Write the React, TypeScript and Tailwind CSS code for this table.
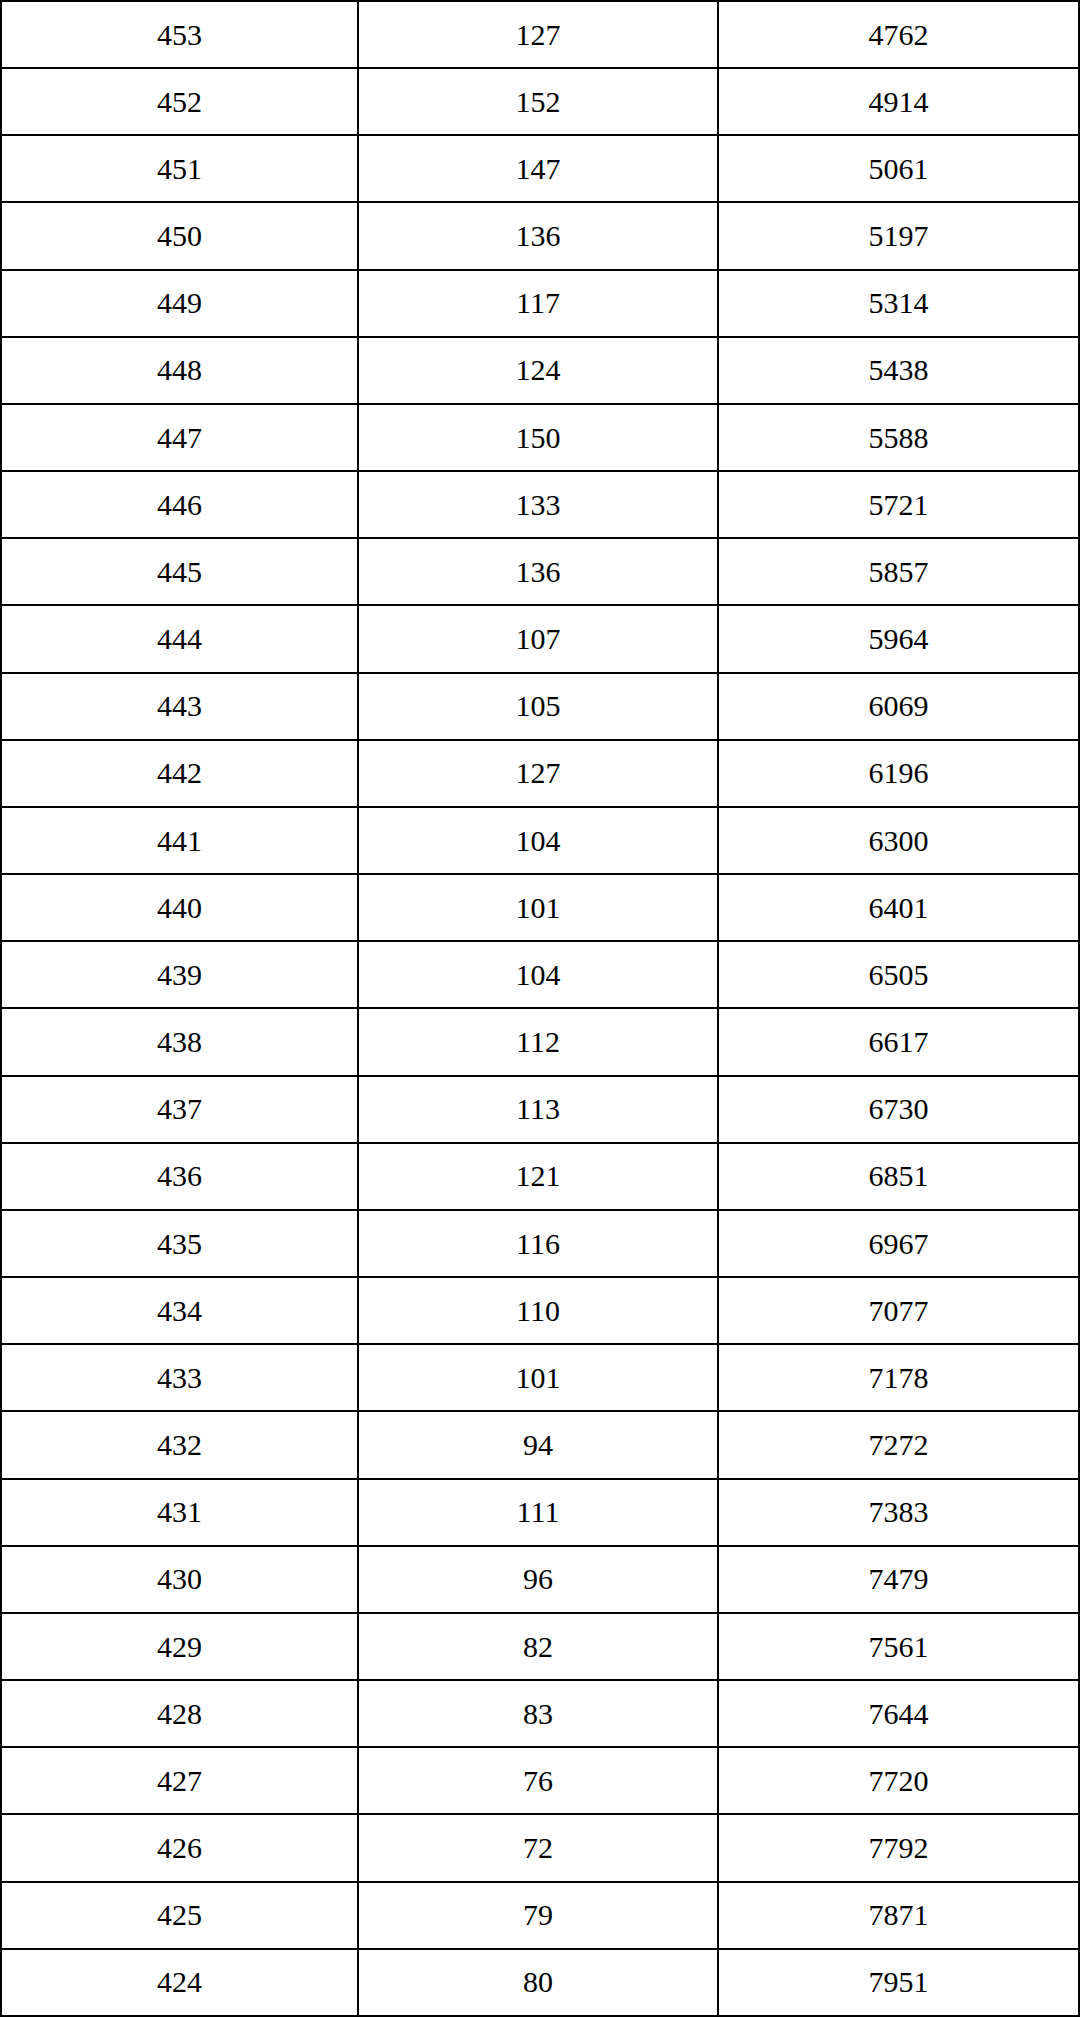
const rows: [number, number, number][] = [
	[453, 127, 4762],
	[452, 152, 4914],
	[451, 147, 5061],
	[450, 136, 5197],
	[449, 117, 5314],
	[448, 124, 5438],
	[447, 150, 5588],
	[446, 133, 5721],
	[445, 136, 5857],
	[444, 107, 5964],
	[443, 105, 6069],
	[442, 127, 6196],
	[441, 104, 6300],
	[440, 101, 6401],
	[439, 104, 6505],
	[438, 112, 6617],
	[437, 113, 6730],
	[436, 121, 6851],
	[435, 116, 6967],
	[434, 110, 7077],
	[433, 101, 7178],
	[432, 94, 7272],
	[431, 111, 7383],
	[430, 96, 7479],
	[429, 82, 7561],
	[428, 83, 7644],
	[427, 76, 7720],
	[426, 72, 7792],
	[425, 79, 7871],
	[424, 80, 7951],
];

export default function App() {
	return (
		<div className="w-[1080px] bg-white">
			<div
				className="grid h-[2017px] grid-cols-[357px_360px_1fr] grid-rows-[repeat(30,1fr)] border-l-2 border-t-2 border-black text-[30px] text-black"
				style={{ fontFamily: '"Liberation Serif", "Noto Sans CJK SC", serif' }}
			>
				{rows.map((row, i) =>
					row.map((value, j) => (
						<div
							key={`${i}-${j}`}
							className="flex items-center justify-center border-b-2 border-r-2 border-black leading-none"
						>
							{value}
						</div>
					)),
				)}
			</div>
		</div>
	);
}
